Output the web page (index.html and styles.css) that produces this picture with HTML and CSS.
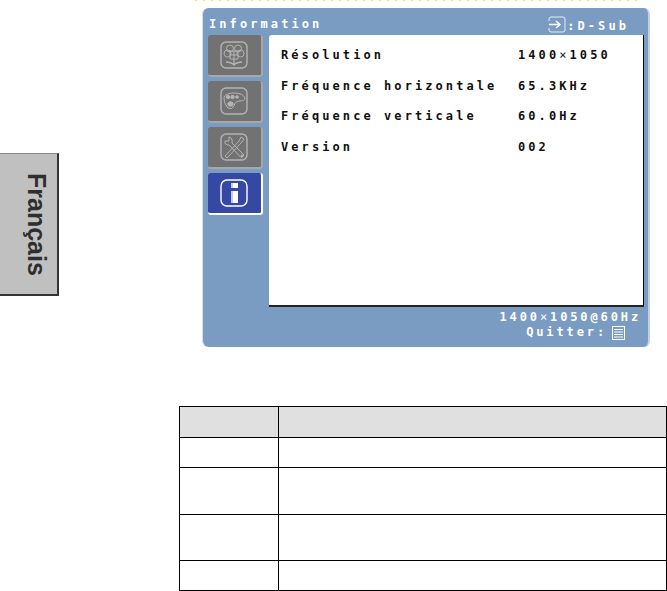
FILE: index.html
```html
<!DOCTYPE html>
<html lang="fr">
<head>
<meta charset="utf-8">
<title>Information</title>
<link rel="stylesheet" href="styles.css">
</head>
<body>
<div class="dots"></div>
<aside class="lang-tab"><span>Français</span></aside>
<section class="osd">
  <header class="osd-head">
    <span>Information</span>
    <span class="source">
      <svg class="src-icon" width="18" height="17" viewBox="0 0 18 17"><path d="M1 5V3Q1 1 3 1H15Q17 1 17 3V14Q17 16 15 16H3Q1 16 1 14V12" fill="none" stroke="#e8edf4" stroke-width="1"/><path d="M1 8.500H11M8 5l4 3.500-4 3.500" fill="none" stroke="#fff" stroke-width="1.400"/></svg>
      <span>:D-Sub</span>
    </span>
  </header>
  <div class="osd-main">
    <nav class="side">
      <div class="btn">
        <svg width="28" height="28" viewBox="0 0 28 28" fill="none" stroke="#b4b4b4"><rect x="1" y="1" width="26" height="26" rx="5" stroke-width="1.400"/><circle cx="10" cy="7.500" r="3.500"/><circle cx="18" cy="7.500" r="3.500"/><circle cx="7.500" cy="12.500" r="3.500"/><circle cx="20.500" cy="12.500" r="3.500"/><path d="M10 10H18V18H10ZM10 14H18M14 10V18"/><path d="M14 18V24M6 21Q11 21 14 24Q17 21 22 21" stroke-width="1.300"/></svg>
      </div>
      <div class="btn">
        <svg width="28" height="28" viewBox="0 0 28 28" fill="none" stroke="#b4b4b4"><rect x="1" y="1" width="26" height="26" rx="5" stroke-width="1.400"/><path d="M4 10Q6 6 14 6Q23 6 25 11Q25 14 20 14Q15 14 14 19Q12 23 8 21Q3 16 4 10Z"/><circle cx="8" cy="10" r="1.700" fill="#b4b4b4"/><circle cx="12.500" cy="10" r="1.700" fill="#b4b4b4"/><circle cx="17" cy="10" r="1.300" fill="#b4b4b4"/><ellipse cx="10.500" cy="17" rx="2.700" ry="2.200" fill="#b4b4b4"/></svg>
      </div>
      <div class="btn">
        <svg width="28" height="28" viewBox="0 0 28 28" fill="none" stroke="#b4b4b4"><rect x="1" y="1" width="26" height="26" rx="5" stroke-width="1.400"/><path d="M9 4V8H5Q4 12 9 12L21 24.500 24 22 12 10Q13 5 9 4Z"/><path d="M5 23 19 8 21 4 24 6 21 10 7 25Z"/><circle cx="22" cy="23" r="1" fill="#b4b4b4"/></svg>
      </div>
      <div class="btn active">
        <svg width="28" height="28" viewBox="0 0 28 28" fill="none"><rect x="1" y="1" width="26" height="26" rx="6" stroke="#fff" stroke-width="1.400"/><rect x="11" y="4" width="7" height="5" fill="#fff"/><rect x="11" y="12" width="7" height="12" fill="#fff"/><rect x="11" y="4" width="2" height="20" fill="#c5cbe8"/><rect x="11" y="9" width="7" height="3" fill="#3548a4"/></svg>
      </div>
    </nav>
    <div class="panel">
      <dl class="info">
        <dt>Résolution</dt><dd>1400<span class="times">×</span>1050</dd>
        <dt>Fréquence horizontale</dt><dd>65.3KHz</dd>
        <dt>Fréquence verticale</dt><dd>60.0Hz</dd>
        <dt>Version</dt><dd>002</dd>
      </dl>
    </div>
  </div>
  <footer class="osd-foot">
    <div>1400<span class="times">×</span>1050@60Hz</div>
    <div class="quit"><span>Quitter:</span>
      <svg width="13" height="14" viewBox="0 0 13 14"><rect x=".5" y=".5" width="12" height="13" fill="none" stroke="#fff"/><path d="M2 3.500H11M2 6H11M2 8.500H11M2 11H11" stroke="#fff" stroke-width="1.200"/></svg>
    </div>
  </footer>
</section>
<table class="grid">
  <tr class="head"><th></th><th></th></tr>
  <tr class="r30"><td></td><td></td></tr>
  <tr class="r47"><td></td><td></td></tr>
  <tr class="r46"><td></td><td></td></tr>
  <tr class="r30"><td></td><td></td></tr>
</table>
</body>
</html>
```
FILE: styles.css
```css
html, body { margin: 0; padding: 0; background: #fff; }
body {
  position: relative;
  width: 667px;
  height: 591px;
  overflow: hidden;
  font-family: "DejaVu Sans Mono", "Liberation Mono", monospace;
}
.dots {
  position: absolute;
  left: 195px;
  top: 0;
  width: 445px;
  height: 1px;
  background: repeating-linear-gradient(90deg, #f5e642 0 2px, #fff 2px 8px);
}
.lang-tab {
  position: absolute;
  left: 0;
  top: 153px;
  box-sizing: border-box;
  width: 59px;
  height: 143px;
  background: #c0c0c0;
  border-top: 1px solid #8a8a8a;
  border-right: 2px solid #333;
  border-bottom: 2px solid #333;
  display: flex;
  align-items: center;
  justify-content: center;
}
.lang-tab span {
  writing-mode: vertical-rl;
  font: bold 25px "Liberation Sans", Arial, sans-serif;
  color: #2e2e2e;
  margin-left: 15px;
}
.osd {
  box-sizing: border-box;
  width: 447px;
  height: 339px;
  margin: 8px 0 0 203px;
  background: #7a9bc2;
  border-radius: 6px;
  border-right: 2px solid #c3d1e3;
  box-shadow: -1px 0 0 #d5e0ec;
  color: #fff;
  font-size: 12px;
  font-weight: bold;
  letter-spacing: 3.080px;
  line-height: 14px;
}
.osd-head {
  height: 27px;
  padding: 9px 19px 0 6px;
  box-sizing: border-box;
  display: flex;
  justify-content: space-between;
}
.source { display: flex; align-items: center; gap: 1px; margin-top: -1px; }
.src-icon { margin-top: -3px; }
.osd-main { display: flex; align-items: flex-start; height: 272px; }
.side {
  width: 66px;
  padding-left: 5px;
  box-sizing: border-box;
  display: flex;
  flex-direction: column;
  gap: 4px;
}
.btn {
  box-sizing: border-box;
  width: 55px;
  height: 42px;
  background: #727272;
  border-right: 2px solid #a8a8a8;
  border-bottom: 2px solid #a8a8a8;
  border-radius: 3px;
  display: flex;
  align-items: center;
  justify-content: center;
  padding-right: 2px;
}
.btn.active {
  background: #3548a4;
  border-color: #fff;
}
.panel {
  box-sizing: border-box;
  width: 375px;
  height: 272px;
  background: #fff;
  border-right: 1px solid #000;
  border-bottom: 2px solid #222;
  border-top-left-radius: 3px;
  padding: 13px 0 0 12px;
  color: #111;
}
.info {
  margin: 0;
  display: grid;
  grid-template-columns: 237px auto;
  grid-auto-rows: 30.700px;
  justify-content: start;
}
.info dt, .info dd { margin: 0; }
.times { font-weight: normal; }
.osd-foot {
  padding: 3px 7px 0 0;
  text-align: right;
  line-height: 15px;
  letter-spacing: 2.880px;
}
.quit {
  display: flex;
  justify-content: flex-end;
  align-items: center;
  gap: 5px;
  margin-right: 16px;
}
.grid {
  position: absolute;
  left: 179px;
  top: 406px;
  border-collapse: collapse;
  table-layout: fixed;
  width: 488px;
}
.grid th, .grid td {
  border: 1px solid #000;
  padding: 0;
}
.grid th:first-child, .grid td:first-child { width: 98px; }
.grid th { background: #e0e0e0; }
.head { height: 31px; }
.r30 { height: 30px; }
.r47 { height: 47px; }
.r46 { height: 46px; }
```
